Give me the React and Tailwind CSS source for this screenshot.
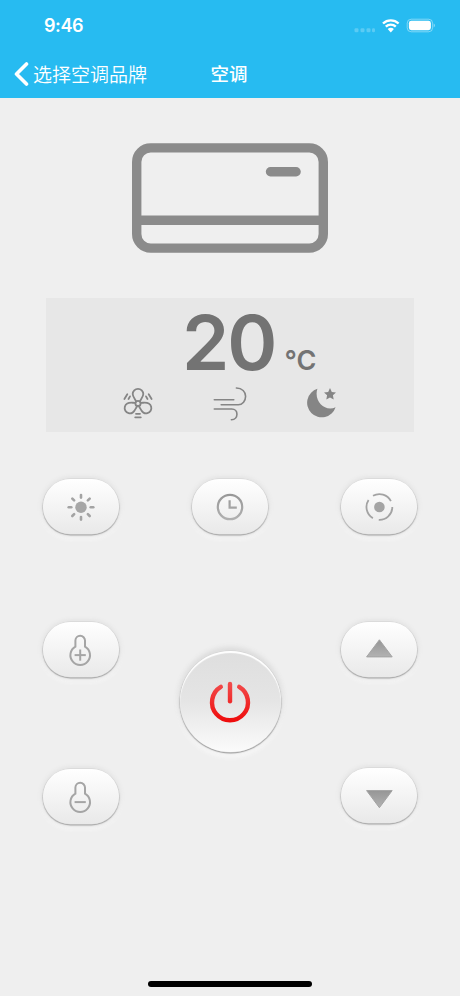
import React from 'react';

// Degradado gris del icono de reloj
function GrayGradient({ id }) {
  return (
    <defs>
      <linearGradient id={id} x1="0" y1="0" x2="0" y2="40" gradientUnits="userSpaceOnUse">
        <stop offset="0.1" stopColor="#949494" />
        <stop offset="0.9" stopColor="#b4b4b4" />
      </linearGradient>
    </defs>
  );
}

function StatusBar() {
  return (
    <div className="h-[50px] flex items-center justify-between pl-11 pr-6">
      <span className="font-['Inter',sans-serif] text-[18px] font-semibold leading-none tracking-[-0.4px] text-white pt-0.5">9:46</span>
      <svg width="82" height="20" viewBox="0 0 82 20" fill="none">
        <g fill="#fff" fillOpacity="0.24">
          <rect x="0.5" y="13.2" width="4" height="4" rx="1.2" />
          <rect x="6.5" y="13.2" width="4" height="4" rx="1.2" />
          <rect x="12.5" y="13.2" width="4" height="4" rx="1.2" />
          <rect x="18" y="13.2" width="3" height="4" rx="1.2" />
        </g>
        <path d="M29 8.5a11.3 11.3 0 0 1 15.6 0M31.8 11.6a7.2 7.2 0 0 1 10 0" stroke="#fff" strokeWidth="2.4" />
        <path d="M33.7 14.1a4.5 4.5 0 0 1 6.2 0L36.8 17.4z" fill="#fff" />
        <rect x="53.2" y="4.2" width="25.4" height="12.6" rx="4" stroke="#fff" strokeOpacity="0.42" />
        <rect x="54.9" y="5.8" width="22" height="9.4" rx="2.4" fill="#fff" />
        <path d="M79.7 8.5c1.7.7 1.7 3.2 0 3.9z" fill="#fff" fillOpacity="0.45" />
      </svg>
    </div>
  );
}

function NavBar() {
  return (
    <div className="h-[46px] grid grid-cols-[199px_60px_201px] items-center font-['Noto_Sans_CJK_SC',sans-serif] text-white">
      <button type="button" className="flex items-center pl-3.5 gap-1 h-[46px]">
        <svg width="15" height="24" viewBox="0 0 15 24" fill="none" className="mt-px">
          <path d="M12.5 2 2.5 12l10 10" stroke="#fff" strokeWidth="3.6" strokeLinecap="round" strokeLinejoin="round" />
        </svg>
        <span className="text-[19px] font-[350] leading-none whitespace-nowrap">选择空调品牌</span>
      </button>
      <h1 className="text-[18.5px] font-medium leading-none text-center">空调</h1>
    </div>
  );
}

function FanIcon() {
  return (
    <svg width="30" height="32" viewBox="0 0 30 32" fill="none" stroke="#858585" strokeWidth="1.8" strokeLinecap="round">
      <path d="M13.2 14.4C11.6 11.6 9.7 9.6 9.7 7.1a5.3 5.3 0 0 1 10.6 0c0 2.5-1.9 4.5-3.5 7.3" />
      <path d="M13.2 14.4C11.6 11.6 9.7 9.6 9.7 7.1a5.3 5.3 0 0 1 10.6 0c0 2.5-1.9 4.5-3.5 7.3" transform="rotate(120 15 16.4)" />
      <path d="M13.2 14.4C11.6 11.6 9.7 9.6 9.7 7.1a5.3 5.3 0 0 1 10.6 0c0 2.5-1.9 4.5-3.5 7.3" transform="rotate(240 15 16.4)" />
      <circle cx="15" cy="16.4" r="2.6" />
      <path d="M4.3 7.3 1.4 12M7 9.4 5.5 12M25.7 7.3l2.9 4.7M23 9.4l1.5 2.6M13 26.8h4M12.2 30.3h5.6" />
    </svg>
  );
}

function WindIcon() {
  return (
    <svg width="34" height="34" viewBox="0 0 34 34" fill="none" stroke="#858585" strokeWidth="1.6" strokeLinecap="round">
      <path d="M1.3 12.7h19.5" />
      <path d="M8.2 17.7h17.1c4.3 0 7.3-4 7.3-8.4 0-4.4-3.5-8.3-9.2-8.3" />
      <path d="M1.3 22h17.4c6.9 0 7.2 10.2-.3 10.8" />
    </svg>
  );
}

function SleepIcon() {
  return (
    <svg width="30" height="30" viewBox="0 0 30 30" fill="#858585">
      <path d="M10.4.8A14.6 14.6 0 1 0 28.6 19.3C18 24.3 6.4 13 10.4.8z" />
      <path d="m23 0 1.8 3.9 4.2.5-3.1 2.9.8 4.2L23 9.4l-3.7 2.1.8-4.2L17 4.4l4.2-.5z" />
    </svg>
  );
}

function SunIcon() {
  const angles = [0, 45, 90, 135, 180, 225, 270, 315];
  return (
    <svg width="40" height="40" viewBox="0 0 40 40">
      <circle cx="20" cy="20.3" r="5.7" fill="#a6a6a6" />
      {angles.map((a) => (
        <path key={a} d="M20 10.6V8" stroke="#a3a3a3" strokeWidth="2.6" strokeLinecap="round" transform={`rotate(${a} 20 20.3)`} />
      ))}
    </svg>
  );
}

function ClockIcon() {
  return (
    <svg width="40" height="40" viewBox="0 0 40 40" fill="none" stroke="url(#clock)" strokeWidth="2.2">
      <GrayGradient id="clock" />
      <circle cx="20" cy="20" r="12.2" />
      <path d="M19.6 13.2v7.4h7.2" />
    </svg>
  );
}

function ModeIcon() {
  return (
    <svg width="40" height="40" viewBox="0 0 40 40" fill="none">
      <circle cx="20.4" cy="20" r="5.3" fill="#a4a4a4" />
      <g stroke="#a3a3a3" strokeWidth="1.8">
        <path d="M14 8.8A12.9 12.9 0 0 1 31.9 14.1" />
        <path d="M14 8.8A12.9 12.9 0 0 1 31.9 14.1" transform="rotate(120 20.4 20)" />
        <path d="M14 8.8A12.9 12.9 0 0 1 31.9 14.1" transform="rotate(240 20.4 20)" />
      </g>
    </svg>
  );
}

function ThermoIcon({ plus }) {
  return (
    <svg width="40" height="40" viewBox="0 0 40 40" fill="none" stroke="#a5a5a5" strokeWidth="2">
      <path d="M19.2 5.8a4.8 4.8 0 0 1 4.8 4.8v6a9.8 9.8 0 1 1-9.6 0v-6a4.8 4.8 0 0 1 4.8-4.8z" />
      <path d="M13.6 25.1h11.2" />
      {plus && <path d="M19.2 19.5v11.2" />}
    </svg>
  );
}

function ArrowIcon({ down }) {
  return (
    <svg width="40" height="40" viewBox="0 0 40 40">
      <defs>
        <linearGradient id={down ? 'down' : 'up'} x1="0" y1="0" x2="0" y2="1">
          <stop offset="0" stopColor="#969696" />
          <stop offset="1" stopColor="#b2b2b2" />
        </linearGradient>
      </defs>
      {down ? (
        <path d="M7.6 14.6h25.6L20.4 31.7z" fill="url(#down)" stroke="#a3a3a3" strokeWidth="1" strokeLinejoin="round" />
      ) : (
        <path d="M7.6 26.9h25.6L20.4 9.8z" fill="url(#up)" stroke="#a3a3a3" strokeWidth="1" strokeLinejoin="round" />
      )}
    </svg>
  );
}

function KeyButton({ children }) {
  return (
    <button
      type="button"
      className="w-[76px] h-[55px] shrink-0 rounded-full flex items-center justify-center bg-linear-to-b from-white to-[#e9e9e9] shadow-[0_0_0_0.5px_#d4d4d4,0_1px_1px_0.5px_#a6a6a6,0_0_4px_2px_#e0e0e0,0_3px_4px_2px_#f8f8f8]"
    >
      {children}
    </button>
  );
}

function PowerButton() {
  return (
    <button
      type="button"
      className="w-[101px] h-[101px] rounded-full flex items-center justify-center bg-linear-to-b from-[#dedede] via-[#e5e5e5] to-[#fbfbfb] shadow-[inset_0_2px_1px_#ffffff,0_0_0_0.5px_#d4d4d4,0_1px_1px_0.5px_#9e9e9e,0_-2px_5px_2px_#dcdcdc,0_4px_5px_1px_#fafafa]"
    >
      <svg width="44" height="44" viewBox="0 0 44 44" fill="none" stroke="url(#power)" strokeWidth="4.4" strokeLinecap="round">
        <defs>
          <linearGradient id="power" x1="0" y1="0" x2="0" y2="44" gradientUnits="userSpaceOnUse">
            <stop offset="0" stopColor="#f25050" />
            <stop offset="1" stopColor="#ee0808" />
          </linearGradient>
        </defs>
        <path d="M12.8 6.8a18 18 0 1 0 18.4 0" />
        <path d="M22 4v17.3" />
      </svg>
    </button>
  );
}

export default function App() {
  return (
    <div className="w-[460px] h-[996px] bg-[#efefef] flex flex-col overflow-hidden select-none">
      <header className="h-[98px] bg-[#27bbf1] shrink-0">
        <StatusBar />
        <NavBar />
      </header>

      {/* Aire acondicionado */}
      <div className="flex justify-center pt-[45px]">
        <svg width="196" height="110" viewBox="0 0 196 110" fill="none" stroke="#8b8b8b" strokeWidth="9.4">
          <rect x="4.7" y="4.9" width="186.6" height="100.2" rx="14" />
          <path d="M5 77.2h186" />
          <path d="M138.5 28.8h25.6" strokeLinecap="round" />
        </svg>
      </div>

      {/* Pantalla */}
      <section className="w-[368px] h-[134px] mx-auto mt-[45px] bg-[#e7e7e7] flex flex-col shrink-0">
        <div className="h-[89px] flex items-baseline pl-[136px] pt-1 font-['Inter',sans-serif] text-[#737373]">
          <span className="text-[76px] leading-[80px] font-semibold tracking-[-2px]">20</span>
          <span className="text-[27px] leading-none font-semibold ml-[9px]">°C</span>
        </div>
        <div className="grid grid-cols-[30px_34px_30px] gap-x-[60px] pl-[77px]">
          <FanIcon />
          <WindIcon />
          <div className="pt-px">
            <SleepIcon />
          </div>
        </div>
      </section>

      {/* Botones */}
      <div className="flex justify-between px-[43px] mt-[47px]">
        <KeyButton><SunIcon /></KeyButton>
        <KeyButton><ClockIcon /></KeyButton>
        <KeyButton><ModeIcon /></KeyButton>
      </div>
      <div className="flex justify-between px-[43px] mt-[88px]">
        <div className="flex flex-col gap-[92px]">
          <KeyButton><ThermoIcon plus /></KeyButton>
          <KeyButton><ThermoIcon /></KeyButton>
        </div>
        <div className="pt-[29px]">
          <PowerButton />
        </div>
        <div className="flex flex-col gap-[91px]">
          <KeyButton><ArrowIcon /></KeyButton>
          <KeyButton><ArrowIcon down /></KeyButton>
        </div>
      </div>

      <div className="mt-auto mb-[9px] mx-auto w-[164px] h-[6px] rounded-full bg-black" />
    </div>
  );
}
